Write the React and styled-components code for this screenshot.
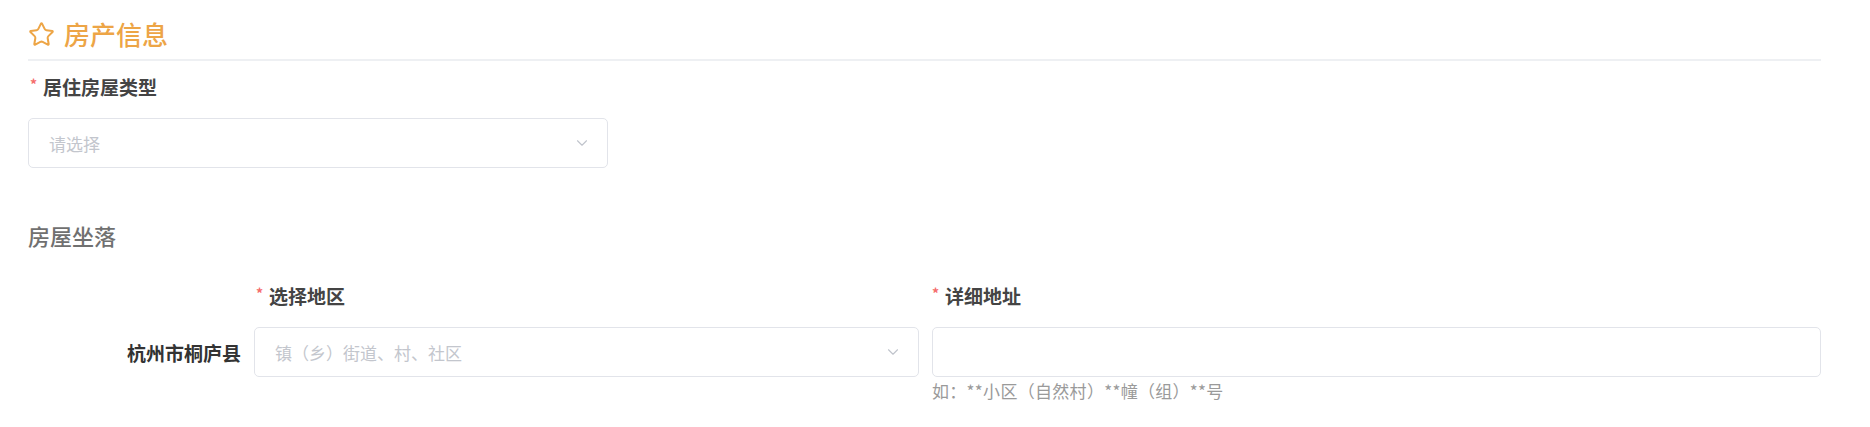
import React from "react";
import styled, { createGlobalStyle } from "styled-components";
import { Star, ChevronDown } from "lucide-react";

const GlobalStyle = createGlobalStyle`
  body {
    margin: 0;
    background: #ffffff;
    font-family: "Noto Sans CJK SC", "Noto Sans", sans-serif;
  }
`;

const Page = styled.div`
  padding: 16px 49px 0 28px;
`;

const Header = styled.div`
  display: flex;
  align-items: center;
  gap: 9px;
  height: 36px;
  padding-bottom: 7px;
  border-bottom: 2px solid #eef0f3;
  color: #eda546;
`;

const Title = styled.h2`
  margin: 0;
  font-size: 26px;
  line-height: 36px;
  font-weight: 500;
  color: #eda546;
`;

const Label = styled.div`
  display: flex;
  align-items: center;
  font-size: 19px;
  line-height: 26px;
  font-weight: 700;
  color: #444;
  margin-top: ${({ $top }) => $top || 0}px;
  margin-left: ${({ $left }) => ($left === undefined ? 2 : $left)}px;
`;

const Required = styled.span`
  color: #f56c6c;
  font-size: 14px;
  line-height: 14px;
  margin-right: 6px;
  position: relative;
  top: -3px;
`;

const Box = styled.div`
  box-sizing: border-box;
  height: 50px;
  width: ${({ $width }) => ($width ? `${$width}px` : "100%")};
  border: 1px solid #e2e4ea;
  border-radius: 5px;
  background: #fff;
  display: flex;
  align-items: center;
  justify-content: space-between;
  padding: 0 16px 0 20px;
  margin-top: ${({ $top }) => $top || 0}px;
`;

const Placeholder = styled.span`
  font-size: 17px;
  color: #c3c6cd;
`;

const Section = styled.h3`
  margin: 52px 0 0;
  font-size: 22px;
  line-height: 30px;
  font-weight: 500;
  color: #707070;
`;

const Grid = styled.div`
  display: grid;
  grid-template-columns: 213px 665px 1fr;
  column-gap: 13px;
  margin-top: 33px;
  align-items: center;
`;

const City = styled.div`
  text-align: right;
  margin-top: 18px;
  font-size: 19px;
  font-weight: 700;
  color: #333;
`;

const Hint = styled.div`
  grid-column: 3;
  margin-top: 3px;
  font-size: 17px;
  line-height: 22px;
  letter-spacing: 0.3px;
  color: #9a9a9a;
`;

const Spacer = styled.div``;

const Select = ({ placeholder, width, top }) => (
  <Box $width={width} $top={top}>
    <Placeholder>{placeholder}</Placeholder>
    <ChevronDown size={18} color="#c0c4cc" strokeWidth={1.5} />
  </Box>
);

export default function App() {
  return (
    <>
      <GlobalStyle />
      <Page>
        <Header>
          <Star size={27} strokeWidth={1.8} />
          <Title>房产信息</Title>
        </Header>

        <Label $top={13}>
          <Required>*</Required>居住房屋类型
        </Label>
        <Select placeholder="请选择" width={580} top={18} />

        <Section>房屋坐落</Section>

        <Grid>
          <Spacer />
          <Label>
            <Required>*</Required>选择地区
          </Label>
          <Label $left={0}>
            <Required>*</Required>详细地址
          </Label>

          <City>杭州市桐庐县</City>
          <Select placeholder="镇（乡）街道、村、社区" top={18} />
          <Box $top={18} />

          <Hint>如：**小区（自然村）**幢（组）**号</Hint>
        </Grid>
      </Page>
    </>
  );
}
